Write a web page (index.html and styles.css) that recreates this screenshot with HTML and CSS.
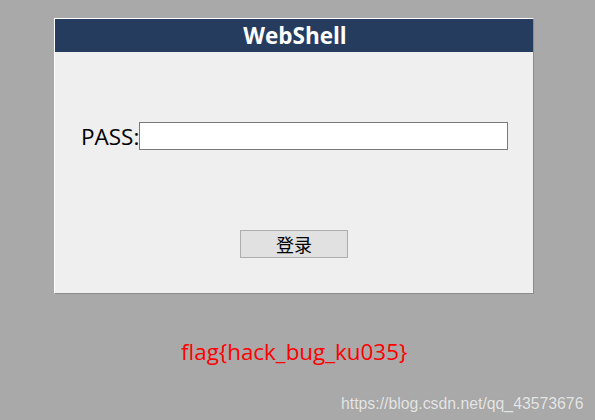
FILE: index.html
```html
<!DOCTYPE html>
<html>
<head>
<meta charset="utf-8">
<link rel="stylesheet" href="styles.css">
</head>
<body>
<div class="panel">
  <div class="header">WebShell</div>
  <div class="form">
    <div class="row">
      <label class="label">PASS:</label><input class="input" type="password">
    </div>
    <div class="btnrow">
      <button class="btn">登录</button>
    </div>
  </div>
</div>
<div class="flag">flag{hack_bug_ku035}</div>
<div class="watermark">https://blog.csdn.net/qq_43573676</div>
</body>
</html>
```
FILE: styles.css
```css
html, body {
  margin: 0;
  padding: 0;
  background: #a9a9a9;
  width: 595px;
  height: 420px;
  overflow: hidden;
  font-family: "Open Sans", "Noto Sans CJK SC", sans-serif;
}
body {
  padding-top: 18px;
  box-sizing: border-box;
}
.panel {
  margin-left: 54px;
  width: 478px;
  height: 274px;
  background: #efefef;
  border-top: 1px solid #ffffff;
  border-left: 1px solid #ffffff;
  border-right: 1px solid #8c8c8c;
  border-bottom: 1px solid #8c8c8c;
}
.header {
  height: 33px;
  background: #263c5f;
  color: #ffffff;
  font-weight: bold;
  font-size: 22.5px;
  line-height: 33px;
  text-align: center;
  padding-left: 2px;
}
.form {
  padding-top: 70px;
}
.row {
  display: flex;
  align-items: center;
  padding-left: 26px;
  height: 28px;
}
.label {
  font-size: 22.5px;
  color: #000;
}
.input {
  box-sizing: border-box;
  width: 369px;
  height: 28px;
  margin: 0;
  border: 1px solid #7a7a7a;
  background: #fff;
  padding: 0;
}
.btnrow {
  display: flex;
  justify-content: center;
  padding-top: 80px;
}
.btn {
  box-sizing: border-box;
  width: 108px;
  height: 28px;
  background: #e1e1e1;
  border: 1px solid #adadad;
  font-family: "Noto Sans CJK SC", sans-serif;
  font-size: 18px;
  color: #000;
  padding: 0;
  line-height: 26px;
}
.flag {
  margin-top: 46px;
  padding-left: 181px;
  color: #ff0000;
  font-size: 22.4px;
  line-height: 24px;
}
.watermark {
  margin-top: 30px;
  padding-left: 341px;
  color: #e6e6e6;
  font-family: "Liberation Sans", Arial, sans-serif;
  font-size: 15.8px;
  line-height: 20px;
  text-shadow: 0 0 1px #999;
}
```
